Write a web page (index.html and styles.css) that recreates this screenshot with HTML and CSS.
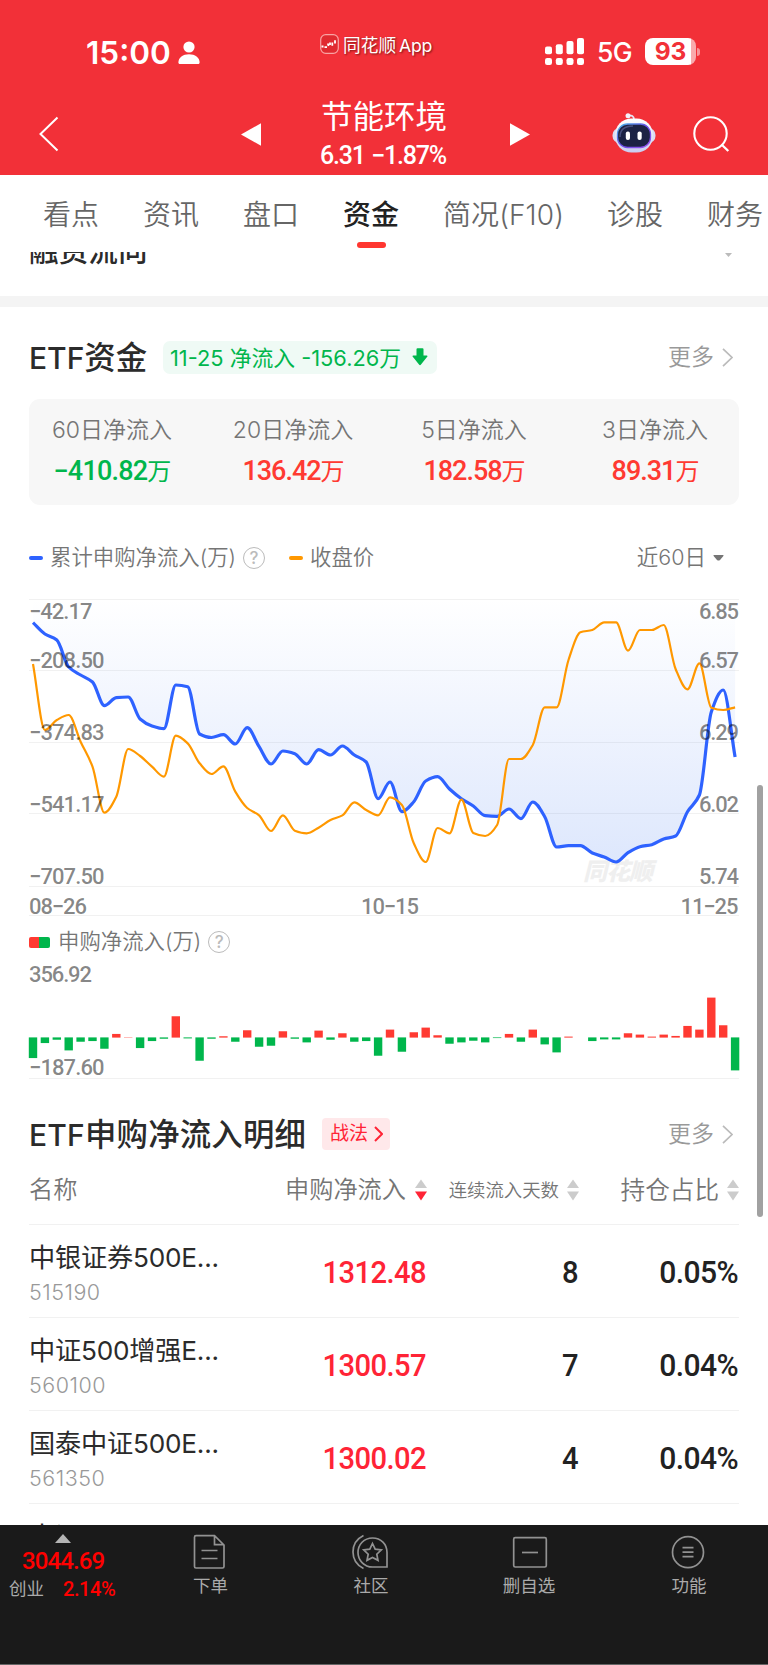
FILE: index.html
```html
<!DOCTYPE html>
<html lang="zh-CN">
<head>
<meta charset="utf-8">
<title>节能环境 资金</title>
<link rel="stylesheet" href="styles.css">
</head>
<body>
<div class="phone">
  <header class="top">
    <div class="status">
      <div class="clock"><span>15:00</span>
        <svg width="22" height="24" viewBox="0 0 22 24"><circle cx="11" cy="6" r="5.6" fill="#fff"/><path d="M.4 21.5C.4 16.500 5 13.300 11 13.300s10.600 3.200 10.600 8.200c0 .9-.5 1.500-1.500 1.500H1.900C.9 23 .4 22.400.4 21.500z" fill="#fff"/></svg>
      </div>
      <div class="applink">
        <svg width="19" height="20" viewBox="0 0 19 20"><rect x=".7" y=".7" width="17.600" height="18.600" rx="5" fill="#e02a30" stroke="#f9a3a3" stroke-width="1.200"/><path d="M1.500 12.500h2M4.500 13.200h2.500M7.800 9.500l.8 2.500M10 8.500v2.500M12.300 8.500v3.200M15 6.200v3.200" stroke="#fff" stroke-width="1.800" fill="none"/></svg>
        <span>同花顺<i>App</i></span>
      </div>
      <div class="signals">
        <svg width="40" height="27" viewBox="0 0 40 27" fill="#fff"><rect y="8.500" width="7" height="7.700" rx="2"/><rect x="10.800" y="6.200" width="7" height="10" rx="2"/><rect x="21.500" y="3" width="7" height="13.200" rx="2"/><rect x="32" width="7" height="16.200" rx="2"/><rect y="20" width="7" height="7" rx="2.200"/><rect x="10.800" y="20" width="7" height="7" rx="2.200"/><rect x="21.500" y="20" width="7" height="7" rx="2.200"/><rect x="32" y="20" width="7" height="7" rx="2.200"/></svg>
        <span class="net">5G</span>
        <span class="battery"><b>93</b></span><span class="nub"></span>
      </div>
    </div>
    <div class="nav">
      <svg class="back" width="20" height="36" viewBox="0 0 20 36"><path d="M18.500 1.500L1.500 18l17 16.500" fill="none" stroke="#fff" stroke-width="2"/></svg>
      <svg width="20" height="23" viewBox="0 0 20 23"><path d="M0 11.500L20 .3v22.400z" fill="#fff"/></svg>
      <div class="stock"><div class="name">节能环境</div><div class="quote"><span>6.31</span><span>−1.87%</span></div></div>
      <svg class="next" width="20" height="23" viewBox="0 0 20 23"><path d="M20 11.500L0 .3v22.400z" fill="#fff"/></svg>
      <svg class="robot" width="44" height="40" viewBox="0 0 44 40">
        <defs><linearGradient id="shell" x1="0" y1="0" x2="0" y2="1"><stop offset="0" stop-color="#fff"/><stop offset="1" stop-color="#c9cdf0"/></linearGradient><linearGradient id="rim" x1="0" y1="0" x2="1" y2="1"><stop offset="0" stop-color="#48b8e8"/><stop offset=".5" stop-color="#6a4be8"/><stop offset="1" stop-color="#9a55ef"/></linearGradient></defs>
        <path d="M16 2.500c3.500-.5 6 .5 6 4" fill="none" stroke="#e4e4f4" stroke-width="1.800"/><circle cx="16" cy="2.800" r="2.500" fill="#f4f2fb"/>
        <rect x=".5" y="15" width="43" height="15" rx="7" fill="#d9dcf4"/>
        <rect x="3" y="5.500" width="38" height="34" rx="16.500" fill="url(#shell)"/>
        <rect x="5.500" y="11" width="33" height="23.500" rx="10" fill="#1c2244" stroke="url(#rim)" stroke-width="1.300"/>
        <path d="M8 24c0-8 5-11 13-11" fill="none" stroke="#48507e" stroke-width="1.500"/>
        <rect x="13.800" y="18.500" width="4.200" height="8.500" rx="2" fill="#fff"/><rect x="25.500" y="18.500" width="4.200" height="8.500" rx="2" fill="#fff"/>
      </svg>
      <svg width="37" height="37" viewBox="0 0 37 37"><circle cx="17.500" cy="17.500" r="16.200" fill="none" stroke="#fff" stroke-width="2.100"/><path d="M28.500 28.500l6.800 6.500" stroke="#fff" stroke-width="2.300"/></svg>
    </div>
  </header>

  <nav class="tabs"><span>看点</span><span>资讯</span><span>盘口</span><span class="on">资金</span><span class="f10">简况(F10)</span><span>诊股</span><span>财务</span></nav>

  <main class="page">
    <section class="prev"><h2>融资流向</h2><svg width="7" height="4" viewBox="0 0 7 4"><path d="M0 0h7L3.500 4z" fill="#bbb"/></svg></section>

    <section class="etf">
      <div class="head"><h2><i>ETF</i>资金</h2>
        <span class="flowtag"><span>11-25 净流入 -156.26万</span><svg width="16" height="18" viewBox="0 0 16 18"><path d="M4.500 1.200Q4.500.2 5.500.2h5q1 0 1 1V7.500h3.300q1.400 0 .4 1.200L9 16.500q-1 1.300-2 0L.8 8.700Q-.2 7.500 1.200 7.500h3.300z" fill="#00b64c"/></svg></span>
        <span class="more">更多<svg width="11" height="19" viewBox="0 0 11 19"><path d="M1 .8l9 8.700-9 8.700" fill="none" stroke="#bbb" stroke-width="1.700"/></svg></span>
      </div>
      <div class="card">
        <div><p>60日净流入</p><b class="down">−410.82<em>万</em></b></div>
        <div><p>20日净流入</p><b>136.42<em>万</em></b></div>
        <div><p>5日净流入</p><b>182.58<em>万</em></b></div>
        <div><p>3日净流入</p><b>89.31<em>万</em></b></div>
      </div>
      <div class="legend">
        <i class="dash blue"></i><span class="cum">累计申购净流入(万)</span><span class="help">?</span>
        <i class="dash orange"></i><span>收盘价</span>
        <span class="range">近60日<svg width="11" height="6" viewBox="0 0 11 6"><path d="M1 0h9q1 0 .4 1L7 5q-1.500 1.200-3 0L.6 1Q0 0 1 0z" fill="#757575"/></svg></span>
      </div>
      <svg class="chart" viewBox="29 590 710 330" width="710" height="330">
        <defs><linearGradient id="fade" gradientUnits="userSpaceOnUse" x1="0" y1="599" x2="0" y2="862"><stop offset="0" stop-color="#2e6bf0" stop-opacity="0"/><stop offset="1" stop-color="#2e6bf0" stop-opacity=".16"/></linearGradient></defs>
        <path class="grid" d="M29 599.500H739M29 670.500H739M29 742.500H739M29 813.500H739M29 886.500H739M29 915.500H739"/>
        <text class="mark" x="583" y="880" textLength="70">同花顺</text>
        <path id="area" fill="url(#fade)"/><path id="flow"/><path id="price"/>
        <g class="axis">
          <text x="29" y="619" textLength="63.500">−42.17</text><text x="29" y="668" textLength="75.500">−208.50</text><text x="29" y="739.500" textLength="75.500">−374.83</text><text x="29" y="811.500" textLength="75.500">−541.17</text><text x="29" y="883.500" textLength="75.500">−707.50</text>
          <text x="699" y="619" textLength="40">6.85</text><text x="699" y="668" textLength="40">6.57</text><text x="699" y="739.500" textLength="40">6.29</text><text x="699" y="811.500" textLength="40">6.02</text><text x="699" y="883.500" textLength="40">5.74</text>
          <text x="29" y="914" textLength="58">08−26</text><text x="361" y="914" textLength="58">10−15</text><text x="680.500" y="914" textLength="58">11−25</text>
        </g>
      </svg>
      <div class="legend small"><i class="duo"></i><span>申购净流入(万)</span><span class="help">?</span></div>
      <svg class="chart bars" viewBox="29 958 710 124" width="710" height="124">
        <path class="grid" d="M29 1078.500H739"/>
        <g id="bars"></g>
        <g class="axis"><text x="29" y="981.500" textLength="63">356.92</text><text x="29" y="1075" textLength="75.500">−187.60</text></g>
      </svg>
    </section>

    <section class="detail">
      <div class="head"><h2><i>ETF</i>申购净流入明细</h2>
        <span class="tip">战法<svg width="9" height="16" viewBox="0 0 9 16"><path d="M1 1l7 7-7 7" fill="none" stroke="#ff2436" stroke-width="2"/></svg></span>
        <span class="more">更多<svg width="11" height="19" viewBox="0 0 11 19"><path d="M1 .8l9 8.700-9 8.700" fill="none" stroke="#bbb" stroke-width="1.700"/></svg></span>
      </div>
      <div class="row th"><span>名称</span>
        <span class="c net-in">申购净流入<svg width="12" height="22" viewBox="0 0 12 22"><path d="M0 9L6 .5 12 9z" fill="#ccc"/><path d="M0 12.500h12L6 21.500z" fill="#ff2436"/></svg></span>
        <span class="c days">连续流入天数<svg width="12" height="22" viewBox="0 0 12 22"><path d="M0 9L6 .5 12 9zM0 12.500h12L6 21.500z" fill="#ccc"/></svg></span>
        <span class="c hold">持仓占比<svg width="12" height="22" viewBox="0 0 12 22"><path d="M0 9L6 .5 12 9zM0 12.500h12L6 21.500z" fill="#ccc"/></svg></span>
      </div>
      <div class="row td"><div><h3>中银证券500E...</h3><small>515190</small></div><b class="up">1312.48</b><b>8</b><b class="pct">0.05%</b></div>
      <div class="row td"><div><h3>中证500增强E...</h3><small>560100</small></div><b class="up">1300.57</b><b>7</b><b class="pct">0.04%</b></div>
      <div class="row td"><div><h3>国泰中证500E...</h3><small>561350</small></div><b class="up">1300.02</b><b>4</b><b class="pct">0.04%</b></div>
      <div class="row td"><div><h3>中证</h3></div></div>
    </section>
    <i class="scroll"></i>
  </main>

  <footer class="bottom">
    <div class="index"><svg width="16" height="9" viewBox="0 0 16 9"><path d="M0 9L8 0l8 9z" fill="#b4b4b4"/></svg><b>3044.69</b><p><span>创业</span><b>2.14%</b></p></div>
    <div class="item i1"><svg width="32" height="36" viewBox="0 0 32 36"><path d="M3 1.700h18.500L31 11v21.500q0 1.500-1.500 1.500H3q-1.500 0-1.500-1.500V3.200Q1.500 1.700 3 1.700zM21.500 1.700v9H31M8.500 16.500h16M8.500 24.500h16"/></svg><span>下单</span></div>
    <div class="item i2"><svg width="36" height="36" viewBox="0 0 36 36"><path d="M11.500 1.500C4.500 5 1 11 1 18s3.500 13 10.500 16.500M35 33H20.500C12 33 6 26 6 18.500 6 10.500 12 4 20.500 4S35 10 35 18.500zM20.500 9.500l2.700 5.600 6.100.8-4.500 4.300 1.200 6.100-5.500-2.900-5.500 2.900 1.200-6.100-4.500-4.300 6.100-.8z"/></svg><span>社区</span></div>
    <div class="item i3"><svg width="36" height="36" viewBox="0 0 36 36"><rect x="1.700" y="3.700" width="32.600" height="29.300" rx="1.500"/><path d="M10 18.500h16"/></svg><span>删自选</span></div>
    <div class="item i4"><svg width="36" height="36" viewBox="0 0 36 36"><circle cx="18" cy="18.200" r="15.500"/><path d="M12.500 13.700h11M12.500 18.200h11M12.500 22.700h11"/></svg><span>功能</span></div>
  </footer>
</div>
<script src="chart.js"></script>
</body>
</html>
```
FILE: styles.css
```css
* { box-sizing: border-box; margin: 0; padding: 0; }
body { background: #fff; font-family: Inter, "Noto Sans CJK SC", sans-serif; color: #2b2b2b; }
i, em { font-style: normal; }
svg { display: block; flex: none; }
.phone { width: 768px; height: 1665px; overflow: hidden; display: flex; flex-direction: column; }

.top { height: 174.500px; background: #f23038; color: #fff; flex: none; }
.status { height: 88px; display: grid; grid-template-columns: 320px 225px 1fr; }
.clock { padding: 33px 0 0 86px; display: flex; align-items: center; height: 72px; font-size: 31.500px; font-weight: 600; gap: 7px; line-height: 40px; }
.applink { display: flex; height: 24px; margin-top: 32px; gap: 4px; align-items: center; font-size: 17.700px; line-height: 24px; text-shadow: 1px 1px 2px #7a1515; }
.applink span { padding-top: 3px; }
.applink i { letter-spacing: -0.3px; margin-left: 3px; }
.signals { display: flex; height: 27px; margin-top: 38px; align-items: center; }
.signals .net { font-size: 26.500px; line-height: 27px; margin: 2px 0 0 12px; width: 48px; font-weight: 450; letter-spacing: -0.7px; }
.battery { width: 51px; height: 27px; border-radius: 8px; background: linear-gradient(90deg, #fff 46px, #f9aaad 46px); color: #f23038; display: flex; justify-content: center; line-height: 27px; font-size: 24.500px; }
.battery b { font-weight: 700; }
.nub { width: 3px; height: 8px; margin-left: 1px; background: #f79499; border-radius: 0 3px 3px 0; }
.nav { height: 86px; display: grid; grid-template-columns: 241px 80px 126px 165px 81px 1fr; align-items: center; padding-top: 6px; }
.back { margin-left: 39px; }
.next { margin-left: 63px; }
.robot { margin-top: -2px; }
.stock { white-space: nowrap; margin-top: 0; }
.name { font-size: 31.500px; line-height: 36px; height: 37px; margin-top: -3px; }
.quote { display: flex; justify-content: space-between; font: 500 25px/31px Roboto, sans-serif; letter-spacing: -1.2px; padding: 4px 1px 0 0; height: 33px; margin-bottom: -2px; margin-left: -1px; }

.tabs { height: 77.500px; flex: none; display: flex; gap: 44px; padding: 19.500px 0 0 43px; font-size: 28px; line-height: 42px; white-space: nowrap; color: #666; font-weight: 350; }
.tabs span { flex: none; width: 56px; }
.tabs .f10 { width: 120px; letter-spacing: 0.1px; }
.tabs .on { font-weight: 500; color: #222; display: flex; flex-direction: column; align-items: center; }
.tabs .on::after { content: ""; width: 29px; height: 6px; border-radius: 3px; background: #ff3630; margin-top: 6px; }

.page { height: 1273px; overflow: hidden; position: relative; flex: none; }
.prev { height: 55px; border-bottom: 11px solid #f4f4f4; overflow: hidden; display: flex; justify-content: space-between; padding: 0 36px 0 29px; }
.prev h2 { margin-top: -19px; font-size: 29.700px; line-height: 32px; font-weight: 500; }
.prev svg { margin-top: 1px; }
h2 { font-size: 31.400px; font-weight: 500; line-height: 44px; white-space: nowrap; padding-top: 1px; }
h2 i { font-size: 30px; }
.etf, .detail { padding: 0 29px; }
.head { display: flex; align-items: center; height: 44px; }
.etf .head { margin-top: 28px; }
.flowtag { width: 274px; height: 33px; padding: 2px 9px 0 7px; border-radius: 7px; background: #effaf5; color: #00b64c; display: flex; justify-content: space-between; align-items: center; font-size: 21.800px; line-height: 31px; white-space: nowrap; }
.etf .head h2 { width: 134px; }
.flowtag svg { margin-top: -2px; }
.more { margin-left: auto; display: flex; align-items: center; gap: 8px; font-size: 23px; line-height: 33px; color: #999; font-weight: 350; padding: 1px 6px 0 0; }
.card { margin-top: 20px; height: 106px; border-radius: 11px; background: #f7f7f7; display: grid; grid-template-columns: repeat(4, 181px); justify-content: center; padding: 14px 1px 0 0; text-align: center; }
.card p { font-size: 23px; line-height: 35px; color: #757575; font-weight: 350; }
.card b { display: block; font: 500 27px/42px Roboto, "Noto Sans CJK SC", sans-serif; color: #ff3a32; letter-spacing: -1px; padding-top: 2px; }
.card b.down { color: #00b64c; letter-spacing: -0.8px; }
.card em { font-weight: 400; font-size: 24px; }
.legend { display: flex; align-items: center; height: 34px; margin-top: 36px; font-size: 21.400px; line-height: 30px; color: #757575; font-weight: 350; white-space: nowrap; }
.legend > span:not(.help) { margin-top: -3px; }
.dash { width: 14px; height: 4px; border-radius: 2px; margin-right: 7px; margin-top: -1px; }
.blue { background: #2e62ff; }
.orange { background: #ff9800; margin-left: 24px; }
.legend .help { width: 22px; height: 22px; border: 1.500px solid #bbb; border-radius: 50%; text-align: center; font-size: 17px; line-height: 20px; margin-left: 7px; color: #bbb; font-weight: 500; margin-top: -1px; }
.legend > .range { margin: -2px 0 0 auto; display: flex; align-items: center; gap: 7px; padding-right: 15px; font-size: 21.500px; }
.range svg { margin-top: 3px; }
.chart { margin-top: 15px; overflow: visible; }
.grid { stroke: #f1f1f1; stroke-width: 1; }
.axis { font: 500 22px Roboto, sans-serif; fill: #000; fill-opacity: .48; }
.mark { font: italic 900 24px "Noto Sans CJK SC", sans-serif; fill: #efefef; }
#flow { fill: none; stroke: #2e62ff; stroke-width: 3.200; }
#price { fill: none; stroke: #ff9800; stroke-width: 2.200; }
.legend.small { margin-top: 5px; height: 33px; padding-top: 2px; }
.duo { width: 21px; height: 11px; border-radius: 2px; background: linear-gradient(90deg, #ff3a32 50%, #00b64c 50%); margin-right: 8px; }
.bars { margin-top: 0; }

.detail .head { margin-top: 30px; }
.detail h2 { letter-spacing: 0.2px; }
.tip { margin-left: 16px; width: 68px; height: 32px; border-radius: 4px; background: #ffe8ea; color: #ff2436; font-size: 19px; line-height: 32px; display: flex; align-items: center; justify-content: space-between; padding: 0 7px 0 8px; }
.row { display: grid; grid-template-columns: 200px 198px 152px 160px; border-bottom: 1px solid #f1f1f1; height: 93px; }
.th { height: 69px; padding-top: 16px; font-size: 24.200px; line-height: 36px; color: #757575; font-weight: 350; }
.c { display: flex; height: 36px; align-items: center; justify-content: flex-end; gap: 9px; }
.days { font-size: 18.400px; gap: 8px; }
.hold { gap: 8px; font-size: 24.600px; }
.td h3 { font-size: 26.200px; font-weight: 400; line-height: 38px; margin-top: 14px; white-space: nowrap; letter-spacing: -0.2px; }
.td small { display: block; font-size: 21.500px; line-height: 28px; margin-top: 1px; color: #999; font-weight: 350; letter-spacing: 0.5px; }
.td b { font: 500 31px/95px Roboto, sans-serif; height: 92px; text-align: right; letter-spacing: -0.6px; color: #222; transform: scaleX(.94); transform-origin: right; padding-right: 1px; }
.td .up { color: #ff2436; }
.td .pct { transform: scaleX(.97); }
.scroll { position: absolute; left: 757px; top: 533px; width: 6px; height: 432px; border-radius: 3px; background: #a1a1a1; }

.bottom { height: 140px; background: #1a1a1a; border-bottom: 1px solid #666; display: grid; grid-template-columns: 127px 167px 154px 160px 1fr; color: #aaa; font-size: 17.500px; }
.index svg { margin: 9px 0 0 55px; }
.index > b { display: block; font: 500 24px/26px Roboto, sans-serif; margin: 5px 0 0 22px; color: #f00; letter-spacing: -0.9px; }
.index p { display: flex; gap: 19px; padding: 2px 0 0 9px; line-height: 26px; }
.index p b { font: 500 20px/26px Roboto, sans-serif; color: #f00; letter-spacing: -0.4px; }
.item { display: flex; flex-direction: column; align-items: center; padding-top: 9px; line-height: 26px; gap: 3px; }
.item svg { fill: none; stroke: #929292; stroke-width: 1.700; }
.i1 svg { margin-right: 4px; }
.i2 svg { margin-right: 3px; }
.i3 svg { margin-left: 4px; }
.i3 span, .i4 span { margin-left: 2px; }
```
FILE: chart.js
```javascript
// Vertical positions of the 60 daily samples.
const flow = [622.7,634,640,667,675,682,705.7,697.7,697,719,726,728.7,685,686.7,734,737.5,734.7,744,727.7,746.7,764,751,753.7,764,749.7,755,746,755,762,798.7,782,811.7,801.7,781,776.7,789,798.7,806,815.7,816.3,809,818.7,802,816.7,847,845.7,845.7,853,857,862,852.7,846.7,844.7,839,836,811.7,795,712,690,757];
const price = [252,450,420,405,485,560,698,650,507,528,560,590,467,490,550,582,559,635,684,706,753,706,752,760,743,720,706,667,690,706,652,675,790,846,744,760,659,759,768,735,537,537,495,382,382,240,157,150,127,127,212,150,150,135,267,328,250,383,390,382].map(v => 580 + v / 3);
const bars = [-62,-17,-7,-39,-13,-11,-34,11,1,-32,-11,-4,64,-3,-70,-4,4,-13,22,-28,-25,19,-4,-15,21,-7,13,-13,-11,-55,24,-43,16,30,7,-19,-15,-10,-15,-2,11,-13,24,-21,-45,3,0,-11,-6,-6,13,9,3,9,5,35,24,120,37,-99];
const step = 11.9, x0 = 33;

// Monotone cubic interpolation along x.
function curve(ys) {
  const n = ys.length, d = [], t = [];
  for (let i = 0; i < n - 1; i++) d.push((ys[i + 1] - ys[i]) / step);
  for (let i = 0; i < n; i++) {
    if (i === 0) t.push(d[0]);
    else if (i === n - 1) t.push(d[n - 2]);
    else if (d[i - 1] * d[i] <= 0) t.push(0);
    else t.push(2 * d[i - 1] * d[i] / (d[i - 1] + d[i]));
  }
  let p = `M${x0} ${ys[0]}`;
  for (let i = 1; i < n; i++) {
    const a = x0 + step * (i - 1), b = a + step, h = step / 3;
    p += `C${a + h} ${ys[i - 1] + t[i - 1] * h} ${b - h} ${ys[i] - t[i] * h} ${b} ${ys[i]}`;
  }
  return p;
}
const line = curve(flow);
document.getElementById('flow').setAttribute('d', line);
document.getElementById('price').setAttribute('d', curve(price));
document.getElementById('area').setAttribute('d', `${line}V599H${x0}Z`);
document.getElementById('bars').innerHTML = bars.map((v, i) => {
  const h = Math.abs(v) / 3;
  return `<rect x="${x0 + step * i - 4.2}" y="${v > 0 ? 1037.600 - h : 1037.400}" width="8.400" height="${h}" fill="${v > 0 ? '#ff3a32' : '#00b64c'}"/>`;
}).join('');
```
